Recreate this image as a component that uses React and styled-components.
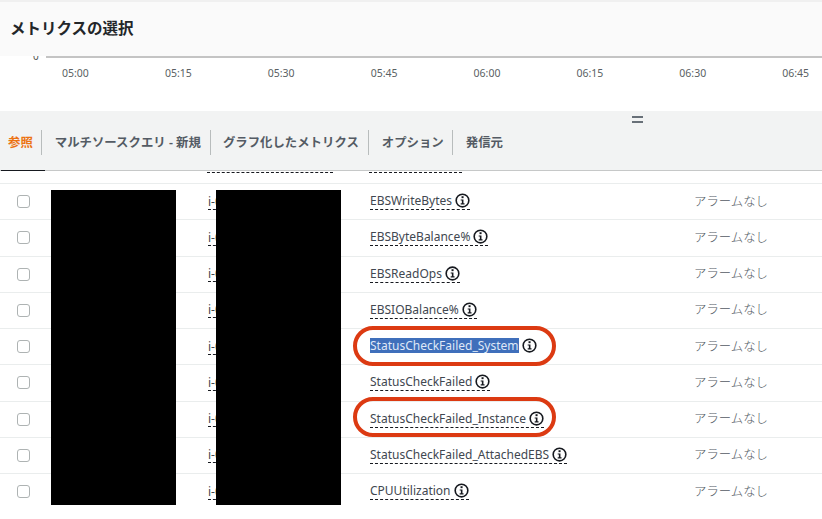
import React from "react";
import styled, { createGlobalStyle } from "styled-components";

const GlobalStyle = createGlobalStyle`
  html, body {
    margin: 0;
    padding: 0;
    background: #ffffff;
  }
  body {
    font-family: "Noto Sans", "Noto Sans CJK JP", sans-serif;
    color: #16191f;
  }
`;

const Page = styled.div`
  position: relative;
  width: 822px;
  height: 519px;
  overflow: hidden;
  background: #fff;
  border-top: 2px solid #f0f0f0;
  box-sizing: border-box;
`;

const Header = styled.div`
  position: relative;
  z-index: 1;
  height: 54px;
  box-sizing: border-box;
  padding: 0 10px 4px;
  display: flex;
  align-items: center;
  background: #fafafa;
`;

const Title = styled.h2`
  margin: 0;
  font-size: 15.5px;
  font-weight: 700;
  color: #232629;
`;

const Chart = styled.div`
  height: 55px;
  box-sizing: border-box;
  position: relative;
`;

const AxisLine = styled.div`
  margin-left: 46px;
  height: 2px;
  background: #c4c4c4;
`;

const ZeroLabel = styled.span`
  position: absolute;
  top: -5px;
  left: 33px;
  font-size: 10px;
  line-height: 10px;
  color: #555;
`;

const Ticks = styled.div`
  display: flex;
  padding: 8px 0 0 62px;
`;

const Tick = styled.span`
  flex: none;
  width: 102.9px;
  font-size: 10.5px;
  line-height: 14px;
  color: #5a5f63;
`;

const TabBar = styled.div`
  position: relative;
  height: 60px;
  box-sizing: border-box;
  padding: 19px 0 0 0;
  display: flex;
  align-items: flex-start;
  background: #f2f3f3;
  border-bottom: 1px solid #c6c8c8;
`;

const Tab = styled.div`
  height: 23px;
  padding: 0 ${(p) => p.$pad}px 2px ${(p) => p.$left}px;
  display: flex;
  align-items: center;
  font-size: 12.4px;
  font-weight: 600;
  white-space: nowrap;
  color: ${(p) => (p.$active ? "#ec7211" : "#545b64")};
  border-right: ${(p) => (p.$last ? "none" : "1px solid #b8bcbc")};
`;

const ActiveLine = styled.span`
  position: absolute;
  left: 1px;
  bottom: -1px;
  width: 44px;
  height: 1px;
  background: #16191f;
`;

const Grip = styled.span`
  position: absolute;
  left: 632px;
  top: 5px;
  width: 11px;
  height: 3px;
  border-top: 2px solid #687078;
  border-bottom: 2px solid #687078;
`;

const Rows = styled.div`
  padding-top: 12px;
  position: relative;
`;

const StubDash = styled.span`
  position: absolute;
  top: 1px;
  left: ${(p) => p.$left}px;
  width: ${(p) => p.$width}px;
  border-top: 1px dashed #16191f;
`;

const Row = styled.div`
  height: 36.25px;
  box-sizing: border-box;
  display: grid;
  grid-template-columns: 208px 162px 324px 1fr;
  align-items: center;
  border-top: 1px solid #eaeded;
  font-size: 12px;
  color: #414750;
`;

const CheckCell = styled.div`
  padding-left: 17px;
  display: flex;
  align-items: center;
`;

const Checkbox = styled.span`
  width: 11px;
  height: 11px;
  border: 1px solid #aeb3b3;
  border-radius: 3px;
  background: #fff;
`;

const InstanceId = styled.span`
  justify-self: start;
  line-height: 15px;
  border-bottom: 1px dashed #16191f;
`;

const MetricCell = styled.div`
  display: flex;
  align-items: center;
`;

const MetricLink = styled.span`
  display: inline-flex;
  align-items: center;
  gap: 3px;
  line-height: 15px;
  padding-bottom: 1px;
  border-bottom: 1px dashed ${(p) => (p.$plain ? "transparent" : "#16191f")};
`;

const MetricName = styled.span`
  background: ${(p) => (p.$selected ? "#3f6fbb" : "transparent")};
  color: ${(p) => (p.$selected ? "#dfe8f7" : "inherit")};
`;

const AlarmText = styled.span`
  font-size: 12.4px;
  font-weight: 300;
  color: #545b64;
  margin-top: -2px;
`;

const Redaction = styled.div`
  position: absolute;
  top: 188px;
  left: ${(p) => p.$left}px;
  width: 125px;
  height: 315px;
  background: #000;
`;

const Callout = styled.div`
  position: absolute;
  left: 353px;
  top: ${(p) => p.$top}px;
  width: 203px;
  height: 40px;
  box-sizing: border-box;
  border: 4px solid #dc3a12;
  border-radius: 20px;
`;

const InfoIcon = () => (
  <svg width="15" height="15" viewBox="0 0 14 14" fill="none">
    <circle cx="7" cy="7" r="5.9" stroke="#16191f" strokeWidth="1.5" />
    <rect x="6.1" y="3" width="1.9" height="1.8" fill="#16191f" />
    <path d="M5.3 6h2.6v3.6h1v1.1H5.3V9.6h1.1V7.1H5.3z" fill="#16191f" />
  </svg>
);

const TICKS = ["05:00", "05:15", "05:30", "05:45", "06:00", "06:15", "06:30", "06:45"];

const TABS = [
  { label: "参照", left: 8, pad: 8, active: true },
  { label: "マルチソースクエリ - 新規", left: 13, pad: 9 },
  { label: "グラフ化したメトリクス", left: 12, pad: 9 },
  { label: "オプション", left: 13, pad: 8 },
  { label: "発信元", left: 13, pad: 0, last: true },
];

const SELECTED = "StatusCheckFailed_System";

const METRICS = [
  "EBSWriteBytes",
  "EBSByteBalance%",
  "EBSReadOps",
  "EBSIOBalance%",
  SELECTED,
  "StatusCheckFailed",
  "StatusCheckFailed_Instance",
  "StatusCheckFailed_AttachedEBS",
  "CPUUtilization",
];

export default function App() {
  return (
    <Page>
      <GlobalStyle />
      <Header>
        <Title>メトリクスの選択</Title>
      </Header>
      <Chart>
        <ZeroLabel>0</ZeroLabel>
        <AxisLine />
        <Ticks>
          {TICKS.map((t) => (
            <Tick key={t}>{t}</Tick>
          ))}
        </Ticks>
      </Chart>
      <TabBar>
        {TABS.map((t) => (
          <Tab key={t.label} $left={t.left} $pad={t.pad} $active={t.active} $last={t.last}>
            {t.label}
          </Tab>
        ))}
        <ActiveLine />
        <Grip />
      </TabBar>
      <Rows>
        <StubDash $left={207} $width={126} />
        <StubDash $left={369} $width={93} />
        {METRICS.map((m) => (
          <Row key={m}>
            <CheckCell>
              <Checkbox />
            </CheckCell>
            <InstanceId>i-0000000000000</InstanceId>
            <MetricCell>
              <MetricLink $plain={m === SELECTED}>
                <MetricName $selected={m === SELECTED}>{m}</MetricName>
                <InfoIcon />
              </MetricLink>
            </MetricCell>
            <AlarmText>アラームなし</AlarmText>
          </Row>
        ))}
      </Rows>
      <Redaction $left={51} />
      <Redaction $left={216} />
      <Callout $top={324} />
      <Callout $top={395} />
    </Page>
  );
}
